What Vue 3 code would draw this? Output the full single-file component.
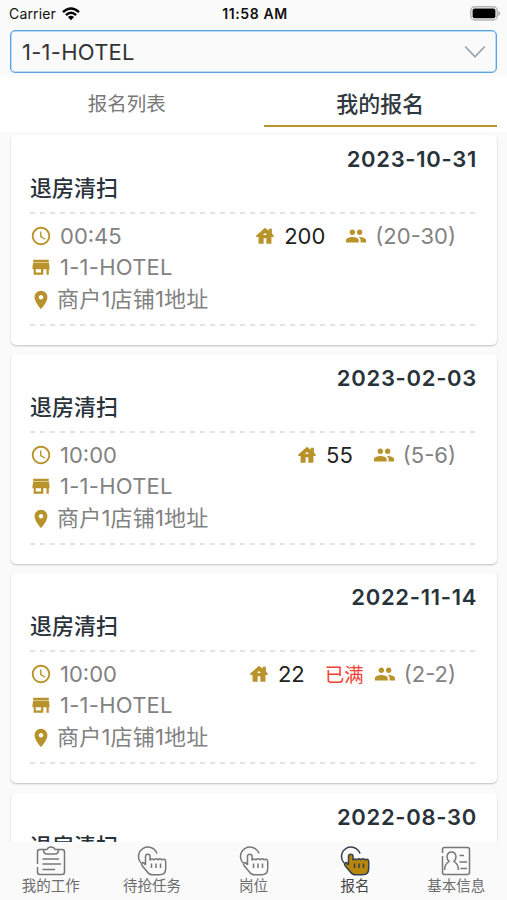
<script setup>
const cards = [
  { date: '2023-10-31', time: '00:45', rooms: '200', range: '(20-30)', full: false },
  { date: '2023-02-03', time: '10:00', rooms: '55', range: '(5-6)', full: false },
  { date: '2022-11-14', time: '10:00', rooms: '22', range: '(2-2)', full: true },
  { date: '2022-08-30', time: '10:00', rooms: '20', range: '(2-3)', full: false },
]
const navs = [
  { label: '我的工作', icon: 'clipboard' },
  { label: '待抢任务', icon: 'hand' },
  { label: '岗位', icon: 'hand' },
  { label: '报名', icon: 'hand', active: true },
  { label: '基本信息', icon: 'profile' },
]
</script>

<template>
  <div class="screen">
    <header class="status">
      <div class="carrier">
        <span>Carrier</span>
        <svg class="wifi" viewBox="0 0 18 14">
          <path d="M1 5.1Q9-2.2 17 5.1M3.9 8.1Q9 3.4 14.1 8.1" fill="none" stroke="#000" stroke-width="2.4" />
          <path d="M5.9 10.1Q9 7.4 12.1 10.1L9 13.3Z" />
        </svg>
      </div>
      <div class="clock">11:58 AM</div>
      <div class="power">
        <svg class="battery" viewBox="0 0 31 15">
          <rect x=".8" y=".8" width="26.4" height="13.2" rx="4" fill="#fafafa" stroke="#b4b4b4" stroke-width="1.5" />
          <rect x="2.6" y="2.5" width="22.8" height="9.8" rx="2" />
          <path d="M28.4 5v5q1.8-.7 1.8-2.5T28.4 5Z" fill="#aaa" />
        </svg>
      </div>
    </header>

    <div class="select">
      <span>1-1-HOTEL</span>
      <svg class="chevron" viewBox="0 0 22 14">
        <path d="M1.2 1.5 11 11.8 20.8 1.5" fill="none" stroke="#98a3ae" stroke-width="1.7" />
      </svg>
    </div>

    <nav class="tabs">
      <div class="tab">报名列表</div>
      <div class="tab active">我的报名</div>
    </nav>

    <main class="list">
      <article v-for="card in cards" :key="card.date" class="card">
        <div class="date">{{ card.date }}</div>
        <h2 class="title">退房清扫</h2>
        <div class="dash"></div>
        <div class="details">
          <div class="row">
            <svg class="icon" viewBox="0 0 24 24">
              <path d="M11.99 2C6.47 2 2 6.48 2 12s4.47 10 9.99 10C17.52 22 22 17.52 22 12S17.52 2 11.99 2zM12 20c-4.42 0-8-3.58-8-8s3.58-8 8-8 8 3.58 8 8-3.58 8-8 8zm.5-13H11v6l5.25 3.15.75-1.23-4.5-2.67z" />
            </svg>
            <span class="text">{{ card.time }}</span>
            <div class="meta">
              <svg class="icon home" viewBox="0 0 24 24">
                <path d="M19.500 9.300V4h-3.500v2.400L12 3 2.500 11.500V13H5v7.500h5.500v-6h3v6H19V13h2.500v-1.500zM10.300 11c0-1 .7-1.900 1.700-1.900s1.700.9 1.700 1.900z" />
              </svg>
              <span class="rooms">{{ card.rooms }}</span>
              <span v-if="card.full" class="full">已满</span>
              <svg class="icon people" :class="{ near: card.full }" viewBox="0 0 24 24">
                <path d="M16 11c1.66 0 2.990-1.340 2.990-3S17.660 5 16 5s-3 1.340-3 3 1.340 3 3 3zm-8 0c1.660 0 2.990-1.340 2.990-3S9.660 5 8 5 5 6.340 5 8s1.340 3 3 3zm0 2c-2.330 0-7 1.170-7 3.500V19h14v-2.500c0-2.330-4.670-3.500-7-3.500zm8 0c-.29 0-.62.020-.97.050 1.160.84 1.970 1.970 1.970 3.450V19h6v-2.500c0-2.330-4.670-3.500-7-3.500z" />
              </svg>
              <span class="text range">{{ card.range }}</span>
            </div>
          </div>
          <div class="row shop">
            <svg class="icon" viewBox="0 0 24 24">
              <path d="M20.500 4h-17v2.500h17zM20.500 7h-17L2.700 12v2.500H4V20.500h10.500v-6H18v6h2.500v-6h.800V12zM12 18H6.300v-3.500H12z" />
            </svg>
            <span class="text">1-1-HOTEL</span>
          </div>
          <div class="row place">
            <svg class="icon" viewBox="0 0 24 24">
              <path d="M12 2C8.13 2 5 5.13 5 9c0 5.25 7 13 7 13s7-7.75 7-13c0-3.87-3.13-7-7-7zm0 9.5c-1.38 0-2.5-1.12-2.5-2.5s1.12-2.5 2.5-2.5 2.5 1.12 2.5 2.5-1.12 2.5-2.5 2.5z" />
            </svg>
            <span class="address">商户1店铺1地址</span>
          </div>
        </div>
        <div class="dash"></div>
      </article>
    </main>

    <footer class="navbar">
      <div v-for="nav in navs" :key="nav.label" class="nav" :class="{ current: nav.active }">
        <svg v-if="nav.icon === 'clipboard'" class="glyph" viewBox="0 0 30 30">
          <path d="M8 3.500H4Q1.500 3.500 1.500 6v12M1.500 21v5q0 2.500 2.500 2.500h22q2.500 0 2.500-2.500V6q0-2.500-2.500-2.500h-4M7.500 3.500q0 4.500 3.500 4.500h8q3.500 0 3.500-4.500h-3.500q-1-2.500-4-2.500t-4 2.500ZM6.500 13H23M6.500 18H25M6.500 23.500H19" />
        </svg>
        <svg v-else-if="nav.icon === 'hand'" class="glyph" viewBox="0 0 30 30">
          <path d="M4 17A9.500 9.500 0 1 1 20 7.500" />
          <path class="palm" d="M8.500 19V10.500Q8.500 8.300 10.800 8.300T13 10.500V14.500Q14 11.800 17 13.800Q19 11.800 21.200 13.800Q23 11.800 25 13.800Q28.700 12 28.700 16V22.500Q28.700 28.800 22.500 28.800H16Q12 28.800 10 25.500L5 19.500Q4 17.600 5.500 16.700Q7 16.200 8.500 19Z" />
          <path d="M14.500 17.500v4.500M19 17.500v4.500M23.500 17.500v4.500" />
        </svg>
        <svg v-else class="glyph" viewBox="0 0 30 30">
          <path d="M1.500 7V3.500q0-2 2-2h23q2 0 2 2v23q0 2-2 2h-23q-2 0-2-2V10M3.500 24q0-5.500 4.500-8.500Q6 13.500 6 10.500 6.500 6 10.500 6T15 10.500q0 3-2 5 4.500 3 4.500 8.500M18.500 9.500h4.500M18.500 16h7.500M19.500 22.500h6.500" />
        </svg>
        <span>{{ nav.label }}</span>
      </div>
    </footer>
  </div>
</template>

<style>
body {
  background: #fafafa;
  overflow: hidden;
}
</style>

<style scoped>
.screen {
  display: flex;
  flex-direction: column;
  width: 507px;
  height: 900px;
  overflow: hidden;
  background: #fafafa;
  font-family: Inter, "Noto Sans CJK SC", sans-serif;
}
.status {
  display: grid;
  grid-template-columns: 1fr auto 1fr;
  align-items: center;
  flex: none;
  height: 30px;
  padding: 0 6px 3px 9px;
  box-sizing: border-box;
  font-size: 14px;
  line-height: 20px;
  color: #111;
}
.carrier {
  display: flex;
  align-items: center;
  gap: 6px;
  letter-spacing: 0.15px;
}
.wifi {
  width: 18px;
  height: 14px;
}
.clock {
  font-weight: 600;
  letter-spacing: 0.6px;
}
.power {
  display: flex;
  justify-content: flex-end;
}
.battery {
  width: 31px;
  height: 15px;
}
.select {
  display: flex;
  flex: none;
  align-items: center;
  justify-content: space-between;
  height: 43px;
  margin: 0 10px;
  padding: 0 10px 0 11px;
  box-sizing: border-box;
  border: 1.500px solid #56a4e6;
  border-radius: 5px;
  box-shadow: inset 0 0 0 0.5px #7dbaf0;
  font-size: 22px;
  letter-spacing: 0.25px;
  color: #333;
}
.chevron {
  width: 22px;
  height: 14px;
}
.tabs {
  display: flex;
  flex: none;
  gap: 20px;
  height: 55px;
  margin-top: 4px;
  padding: 0 10px 5px;
  box-sizing: border-box;
  background: #fff;
}
.tab {
  flex: 1;
  text-align: center;
  font-size: 19.5px;
  line-height: 55px;
  color: #777;
}
.tab.active {
  font-size: 22px;
  font-weight: 500;
  color: #303840;
  border-bottom: 2px solid #b8932b;
}
.list {
  display: flex;
  flex: 1;
  min-height: 0;
  flex-direction: column;
  gap: 9.200px;
  padding: 3px 10px 0 11px;
  overflow: hidden;
}
.card {
  flex: none;
  height: 210px;
  padding: 11px 20px 0 19px;
  box-sizing: border-box;
  border-radius: 5px;
  background: #fff;
  box-shadow: 0 1px 2px rgba(0, 0, 0, 0.24);
}
.date {
  height: 27px;
  line-height: 27px;
  text-align: right;
  font-size: 22px;
  font-weight: 600;
  letter-spacing: 0.7px;
  color: #28323a;
}
.title {
  height: 29px;
  margin: 0;
  line-height: 30px;
  font-size: 22px;
  font-weight: 500;
  color: #28323a;
}
.dash {
  height: 2px;
  margin-top: 10px;
  background: repeating-linear-gradient(90deg, #e3e3e3 0 5px, transparent 5px 10px);
}
.details {
  padding-top: 6px;
  height: 100px;
  box-sizing: border-box;
}
.row {
  display: flex;
  align-items: center;
  height: 31px;
  font-size: 22px;
  color: #828282;
}
.shop .text {
  letter-spacing: 0.25px;
}
.place {
  height: 35px;
}
.icon {
  flex: none;
  width: 22px;
  height: 22px;
  fill: #b8932b;
}
.text {
  margin-left: 8px;
}
.address {
  margin-left: 5px;
  line-height: 32px;
  padding-bottom: 1px;
  letter-spacing: 0.2px;
}
.meta {
  display: flex;
  align-items: center;
  margin-left: auto;
  margin-right: 21px;
}
.rooms {
  margin-left: 8px;
  color: #222;
}
.people {
  margin-left: 20px;
}
.people.near {
  margin-left: 10px;
}
.full {
  margin-left: 20px;
  font-size: 19.500px;
  color: #f44336;
}
.navbar {
  display: flex;
  flex: none;
  height: 58px;
  padding-top: 4px;
  box-sizing: border-box;
  background: #fafafa;
}
.nav {
  display: flex;
  flex: 1;
  flex-direction: column;
  align-items: center;
  font-size: 14.500px;
  line-height: 19px;
  color: #6c6c6c;
}
.glyph {
  width: 30px;
  height: 30px;
  fill: none;
  stroke: #777;
  stroke-width: 1.500;
}
.current {
  color: #444;
}
.current .glyph {
  stroke: #354052;
}
.current .palm {
  fill: #b8860b;
}
</style>
